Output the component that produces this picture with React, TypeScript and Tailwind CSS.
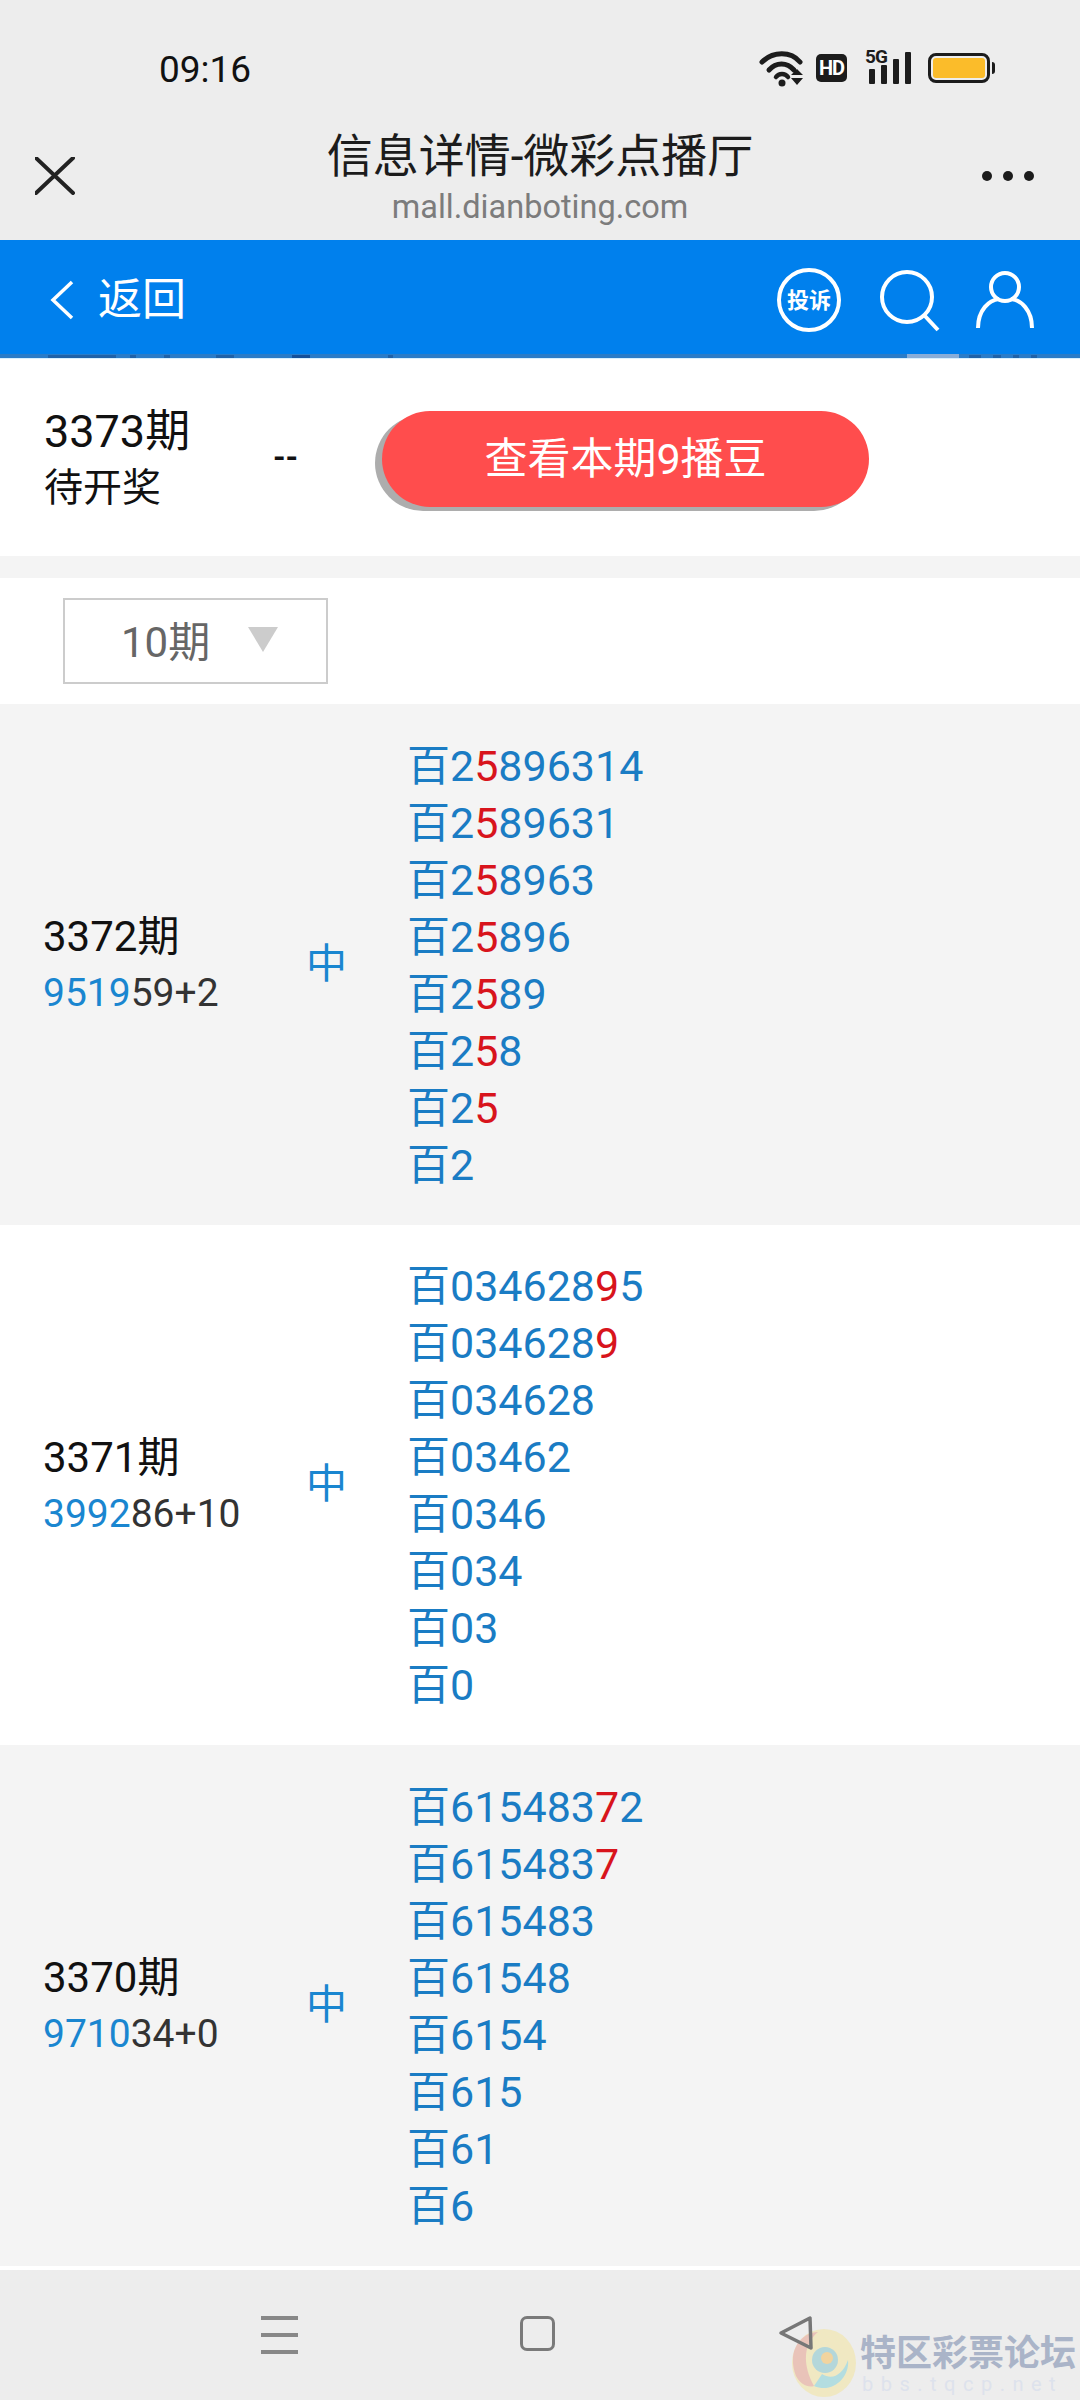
const draws = [
  {
    issue: "3372期",
    code: ["9519", "59+2"],
    prefixes: ["2", "2", "2", "2", "2", "2", "2", "2"],
    hit: "5",
    tails: ["896314", "89631", "8963", "896", "89", "8", "", ""],
    plain: 7,
    shaded: true,
  },
  {
    issue: "3371期",
    code: ["3992", "86+10"],
    prefixes: ["034628", "034628", "034628", "03462", "0346", "034", "03", "0"],
    hit: "9",
    tails: ["5", "", "", "", "", "", "", ""],
    plain: 2,
    shaded: false,
  },
  {
    issue: "3370期",
    code: ["9710", "34+0"],
    prefixes: ["615483", "615483", "615483", "61548", "6154", "615", "61", "6"],
    hit: "7",
    tails: ["2", "", "", "", "", "", "", ""],
    plain: 2,
    shaded: true,
  },
];

function StatusIcons() {
  return (
    <div className="flex items-center">
      <svg width="48" height="40" viewBox="0 0 48 40">
        <path d="M3 14 C14 3 32 3 41 14" fill="none" stroke="#1c1c1c" strokeWidth="5" strokeLinecap="round" />
        <path d="M10 22 C17 14 28 14 35 22" fill="none" stroke="#1c1c1c" strokeWidth="5" strokeLinecap="round" />
        <path d="M17 29 C20 25 26 25 29 29" fill="none" stroke="#1c1c1c" strokeWidth="4.5" strokeLinecap="round" />
        <circle cx="23" cy="35" r="3.5" fill="#1c1c1c" />
        <path d="M38 21 L44 27 H32 Z M32 30 H44 L38 37 Z" fill="#1c1c1c" />
      </svg>
      <div className="ml-[9px] flex h-[28px] w-[31px] items-center justify-center rounded-[5px] bg-[#1c1c1c] text-[20px] leading-none font-bold tracking-[-1px] text-white">
        HD
      </div>
      <div className="relative ml-[18px] h-[38px] w-[50px]">
        <span className="absolute -top-[2px] left-0 text-[19px] leading-[20px] font-bold tracking-[-1px] text-[#1c1c1c]">
          5G
        </span>
        <svg width="50" height="38" viewBox="0 0 50 38">
          <rect x="4" y="20" width="6" height="15" rx="1" fill="#1c1c1c" />
          <rect x="16" y="16" width="6" height="19" rx="1" fill="#1c1c1c" />
          <rect x="28" y="10" width="6" height="25" rx="1" fill="#1c1c1c" />
          <rect x="40" y="3" width="6" height="32" rx="1" fill="#1c1c1c" />
        </svg>
      </div>
      <div className="ml-[13px] flex items-center">
        <div className="h-[30px] w-[62px] rounded-[8px] border-[3px] border-[#1c1c1c] p-[2px]">
          <div className="h-full w-full rounded-[3px] bg-[#fbbc2a]" />
        </div>
        <div className="ml-[2px] h-[12px] w-[3px] rounded-r-sm bg-[#1c1c1c]" />
      </div>
    </div>
  );
}

function DrawRow({ draw }: { draw: (typeof draws)[0] }) {
  return (
    <div className={`flex h-[520.5px] items-center ${draw.shaded ? "bg-[#f4f4f4]" : "bg-white"}`}>
      <div className="w-[306px] pt-[3px] pl-[43px]">
        <div className="text-[42px] leading-[52px] text-[#111]">{draw.issue}</div>
        <div className="mt-[3px] text-[39px] leading-[54px] text-[#333]">
          <span className="text-[#1a86d0]">{draw.code[0]}</span>
          {draw.code[1]}
        </div>
      </div>
      <div className="w-[101px] text-[41px] text-[#1a86d0]">中</div>
      <div className="pt-[3px] text-[43px] leading-[57px] text-[#1a7cc4]">
        {draw.prefixes.map((prefix, i) => (
          <div key={i}>
            百{prefix}
            {i < draw.plain && <span className="text-[#d8141c]">{draw.hit}</span>}
            {draw.tails[i]}
          </div>
        ))}
      </div>
    </div>
  );
}

export default function App() {
  return (
    <div
      className="flex h-[2400px] w-[1080px] flex-col overflow-hidden bg-white"
      style={{ fontFamily: 'Roboto, "Noto Sans CJK SC", sans-serif' }}
    >
      {/* status bar + browser title */}
      <div className="h-[240px] bg-[#ededed]">
        <div className="flex h-[140px] items-start justify-between pt-[48px] pr-[85px] pl-[159px]">
          <span className="text-[37px] leading-[44px] text-[#111]">09:16</span>
          <StatusIcons />
        </div>
        <div className="relative -mt-[16px] text-center">
          <div className="text-[46px] leading-[64px] text-[#1c1c1c]">信息详情-微彩点播厅</div>
          <div className="-mt-[2px] text-[32.5px] leading-[42px] text-[#7c7c7c]">mall.dianboting.com</div>
          <svg width="40" height="38" viewBox="0 0 40 38" className="absolute top-[33px] left-[35px]">
            <path d="M1 1 L38 36 M38 1 L1 36" stroke="#222" strokeWidth="4" strokeLinecap="round" />
          </svg>
          <div className="absolute top-[47px] left-[982px] flex gap-[11px]">
            <span className="h-[10px] w-[10px] rounded-full bg-[#1c1c1c]" />
            <span className="h-[10px] w-[10px] rounded-full bg-[#1c1c1c]" />
            <span className="h-[10px] w-[10px] rounded-full bg-[#1c1c1c]" />
          </div>
        </div>
      </div>

      {/* site header */}
      <div className="relative z-10 flex h-[119px] items-center justify-between border-b border-[#d6f0ff] bg-[#0080ed] pt-[2px] pr-[45px] pl-[50px]">
        <div className="flex items-center">
          <svg width="24" height="40" viewBox="0 0 24 40">
            <path d="M22 2 L3 20 L22 38" fill="none" stroke="#fff" strokeWidth="3.5" />
          </svg>
          <span className="ml-[24px] text-[44px] leading-none text-white">返回</span>
        </div>
        <div className="flex items-center">
          <div className="flex h-[64px] w-[64px] items-center justify-center rounded-full border-[4px] border-white text-[22px] font-bold whitespace-nowrap text-white">
            投诉
          </div>
          <svg width="64" height="64" viewBox="0 0 64 64" className="ml-[37px]">
            <circle cx="29" cy="29" r="25" fill="none" stroke="#fff" strokeWidth="4" />
            <path d="M46 47 L60 62" stroke="#fff" strokeWidth="4" />
          </svg>
          <svg width="60" height="60" viewBox="0 0 60 60" className="ml-[33px]">
            <circle cx="30" cy="17" r="14" fill="none" stroke="#fff" strokeWidth="4" />
            <path d="M3 58 C3 40 14 30 24 29 M57 58 C57 40 46 30 36 29" fill="none" stroke="#fff" strokeWidth="4" />
          </svg>
        </div>
        <div className="absolute inset-x-0 bottom-0 flex h-[4px] items-center bg-[#2a7cc8] pl-[48px]">
          <span className="h-[3px] w-[68px] bg-[#1f62a8]" />
          <span className="ml-[14px] h-[3px] w-[6px] bg-[#1f62a8]" />
          <span className="ml-[28px] h-[3px] w-[6px] bg-[#1f62a8]" />
          <span className="ml-[46px] h-[3px] w-[18px] bg-[#1f62a8]" />
          <span className="ml-[58px] h-[3px] w-[18px] bg-[#14509a]" />
          <span className="ml-[78px] h-[3px] w-[5px] bg-[#1f62a8]" />
          <span className="ml-[514px] h-[4px] w-[52px] bg-[#88add8]" />
          <span className="ml-[10px] h-[3px] w-[12px] bg-[#1f62a8]" />
          <span className="ml-[12px] h-[3px] w-[8px] bg-[#1f62a8]" />
          <span className="ml-[12px] h-[3px] w-[6px] bg-[#1f62a8]" />
          <span className="ml-[12px] h-[3px] w-[6px] bg-[#1f62a8]" />
        </div>
      </div>

      {/* current issue */}
      <div className="flex h-[197px] items-center bg-white pt-[3px] pl-[44px]">
        <div className="w-[229px]">
          <div className="text-[45px] leading-[58px] text-[#111]">3373期</div>
          <div className="text-[39px] leading-[54px] text-[#111]">待开奖</div>
        </div>
        <div className="-mt-[5px] w-[109px] text-[32px] font-bold text-[#111]">--</div>
        <div className="flex h-[96px] w-[487px] items-center justify-center rounded-full bg-[#ff4d4d] text-[43px] text-white shadow-[-7px_4px_0_#adadad]">
          查看本期9播豆
        </div>
      </div>
      <div className="h-[22px] bg-[#f4f4f4]" />

      {/* period picker */}
      <div className="flex h-[126px] items-start bg-white pt-[20px] pl-[63px]">
        <div className="flex h-[86px] w-[265px] items-center border-2 border-[#ccc] pt-[3px] pl-[56px]">
          <span className="text-[42px] text-[#666]">10期</span>
          <span className="-mt-[6px] ml-[38px] h-0 w-0 border-x-[15px] border-t-[25px] border-x-transparent border-t-[#ccc]" />
        </div>
      </div>

      {draws.map((draw) => (
        <DrawRow key={draw.issue} draw={draw} />
      ))}

      {/* system nav */}
      <div className="relative mt-[4.5px] flex-1 bg-[#ededed]">
        <div className="absolute top-[46px] left-[261px] flex flex-col gap-[13px]">
          <span className="h-[4px] w-[37px] bg-[#888]" />
          <span className="h-[4px] w-[37px] bg-[#888]" />
          <span className="h-[4px] w-[37px] bg-[#888]" />
        </div>
        <div className="absolute top-[46px] left-[520px] h-[35px] w-[35px] rounded-[7px] border-[3px] border-[#7a7a7a]" />
        <svg width="72" height="74" viewBox="0 0 72 74" className="absolute top-[56px] left-[788px] opacity-60">
          <ellipse cx="36" cy="37" rx="32" ry="34" fill="#f2e6a6" />
          <path d="M8 50 C-2 24 14 6 30 6 C18 16 12 34 26 60 C20 62 12 58 8 50 Z" fill="#e8a898" />
          <path d="M26 60 C44 68 62 52 60 34 C54 50 44 54 34 48 Z" fill="#8ed4d8" />
          <circle cx="37" cy="34" r="13" fill="#8fc9cf" />
          <circle cx="39" cy="32" r="6" fill="#f4c46c" />
        </svg>
        <svg width="36" height="38" viewBox="0 0 36 38" className="absolute top-[45px] left-[778px]">
          <path d="M32 3 L33 33 L3 18 Z" fill="none" stroke="#777" strokeWidth="3.5" strokeLinejoin="round" />
        </svg>
        <div className="absolute top-[64px] left-[860px] text-[36px] leading-[40px] font-bold whitespace-nowrap text-[#aab4c8]">
          特区彩票论坛
        </div>
        <div className="absolute top-[102px] left-[862px] text-[20px] leading-[24px] tracking-[7.5px] whitespace-nowrap text-[#dde2ec]">
          bbs.tqcp.net
        </div>
      </div>
    </div>
  );
}
